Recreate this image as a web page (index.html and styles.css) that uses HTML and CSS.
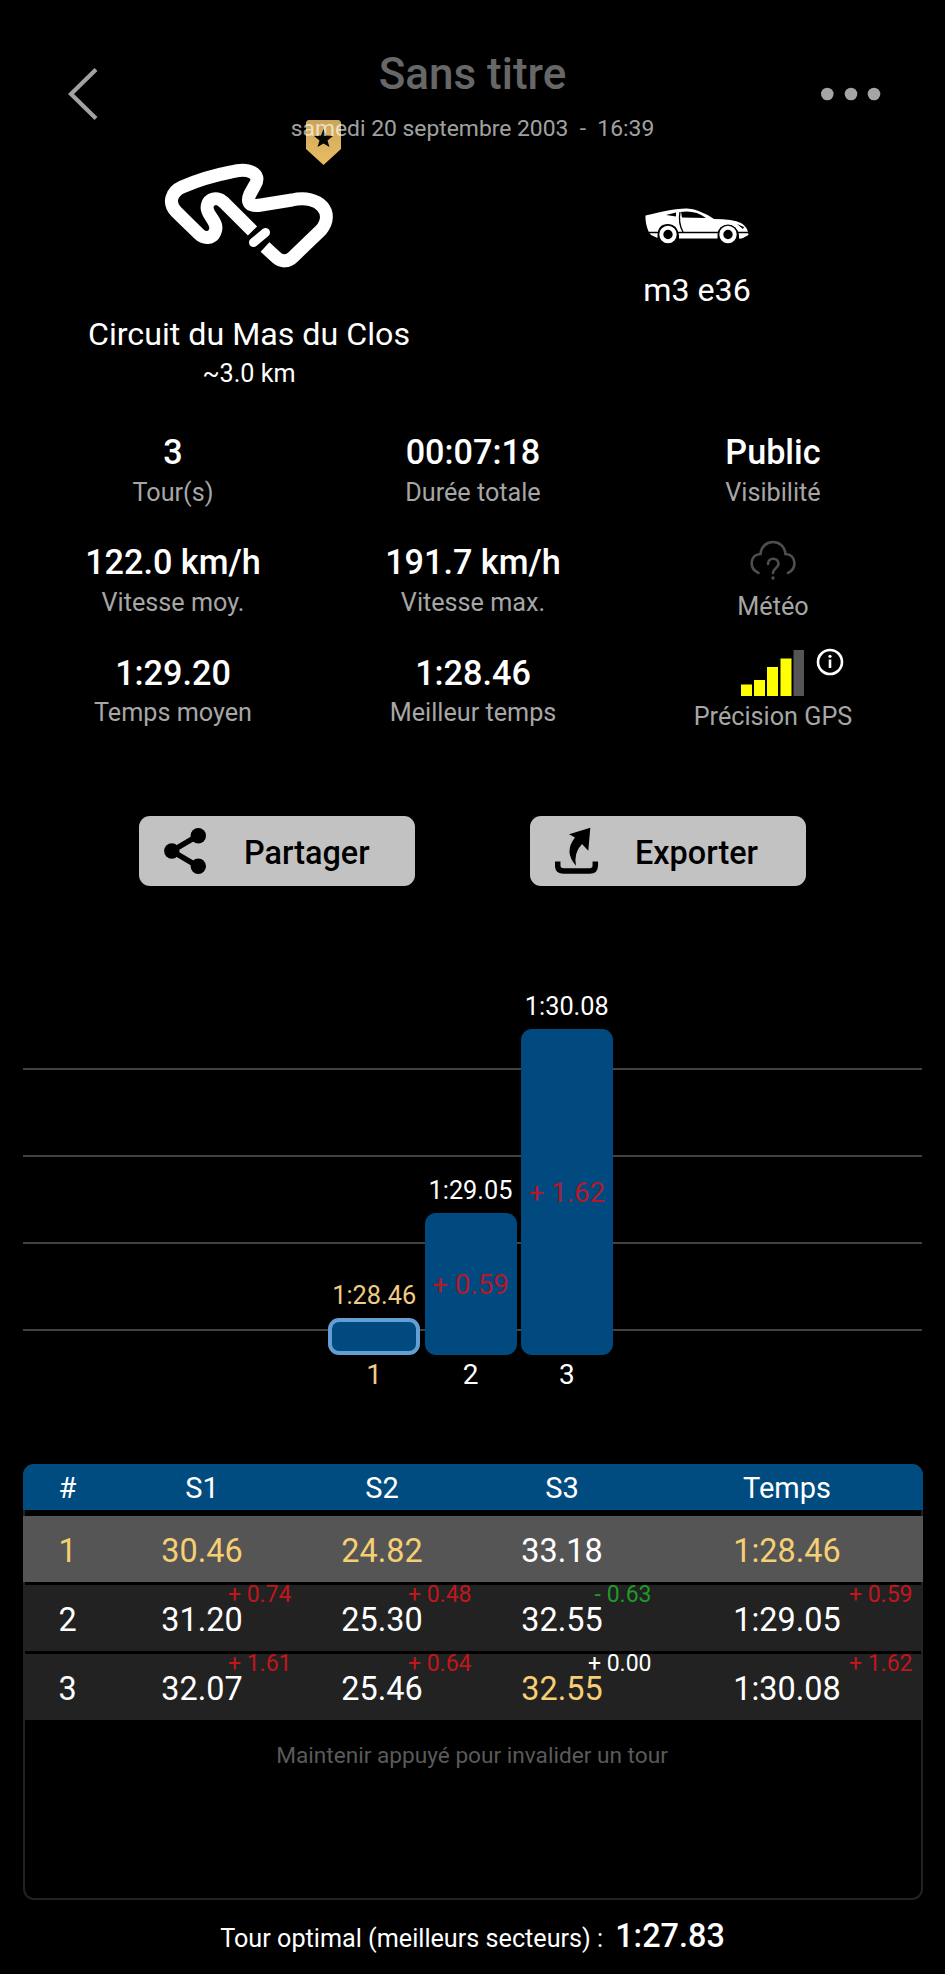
FILE: index.html
```html
<!DOCTYPE html>
<html lang="fr">
<head>
<meta charset="utf-8">
<title>Sans titre</title>
<link rel="stylesheet" href="styles.css">
</head>
<body>
<header class="header">
  <svg class="back" viewBox="0 0 30 52"><path d="M28 1.500L3 26L28 50.500" fill="none" stroke="#a2a2a2" stroke-width="4.200"/></svg>
  <div class="heading">
    <h1 class="title">Sans titre</h1>
    <p class="date">samedi 20 septembre 2003&nbsp; -&nbsp; 16:39</p>
  </div>
  <svg class="more" viewBox="0 0 62 14"><g fill="#a5a5a5"><circle cx="7.300" cy="7" r="6.300"/><circle cx="31" cy="7" r="6.300"/><circle cx="54" cy="7" r="6.300"/></g></svg>
</header>

<section class="hero">
  <div class="hero-col">
    <div class="track-box">
      <svg class="track" viewBox="-1 0 170 106">
        <path d="M87.500 68L59 39.500C50 31 40 38 42.500 47C44 54 54 60 50 69C47 76 39 76 34 71L11 48.500C3 40 6 29 17 24Q40 14 66 9C84 4 97 11 90 22L85 31C81 40 85 44 96 42L127 37C155 31 170 50 156 67L128 94C123 99 117 99 112 95L100 84" fill="none" stroke="#fff" stroke-width="13" stroke-linejoin="round"/>
        <path d="M89 79L100 69" stroke="#000" stroke-width="15" stroke-linecap="round"/>
        <path d="M88.500 79.500L100.500 69.500" stroke="#fff" stroke-width="9" stroke-linecap="round"/>
      </svg>
      <svg class="badge" viewBox="0 0 35 45">
        <defs><linearGradient id="gold" x1="0" y1="0" x2="0" y2="1"><stop offset="0" stop-color="#c9a458"/><stop offset=".6" stop-color="#deb560"/><stop offset="1" stop-color="#e6bc62"/></linearGradient></defs>
        <path d="M2 0H33L35 2V29L17.500 45L0 29V2Z" fill="url(#gold)"/>
        <path d="M17.500 9L20 15.500L27 16L21.500 20.500L23.500 27L17.500 23.500L11.500 27L13.500 20.500L8 16L15 15.500Z" fill="#070500"/>
      </svg>
    </div>
    <p class="hero-name">Circuit du Mas du Clos</p>
    <p class="hero-sub">~3.0 km</p>
  </div>
  <div class="hero-col hero-car">
    <svg class="car" viewBox="0 0 104 36">
      <path d="M.5 7.500Q30 0 42 .5Q54 1 69 11Q88 11 96 15Q103 19 103.500 27L98 30Q94 31.500 94 30V27Q92 17 83 17Q73 17 72.500 27V30.500H34V27Q32 16 23 16Q13 16 12.500 27V30L6 27L3.500 23.500Q0 15 .5 7.500Z" fill="#fff"/>
      <path d="M21 7L31 4.500V8.500ZM36 4Q50 2 61 10L37 9.500ZM92 16L99 19L98 21Z" fill="#000"/>
      <path d="M35 4Q33 15 38 24M3 24.500H14M32 24.500H74M92 24.500H104" fill="none" stroke="#000" stroke-width="1.300"/>
      <circle cx="23" cy="26.500" r="10" fill="#000"/><circle cx="83" cy="26.500" r="10" fill="#000"/>
      <g fill="#000" stroke="#fff" stroke-width="4"><circle cx="23" cy="26.500" r="6.700"/><circle cx="83" cy="26.500" r="6.700"/></g>
    </svg>
    <p class="hero-name">m3 e36</p>
  </div>
</section>

<section class="stats">
  <div class="stat"><p class="value">3</p><p class="label">Tour(s)</p></div>
  <div class="stat"><p class="value">00:07:18</p><p class="label">Durée totale</p></div>
  <div class="stat"><p class="value">Public</p><p class="label">Visibilité</p></div>
  <div class="stat"><p class="value">122.0 km/h</p><p class="label">Vitesse moy.</p></div>
  <div class="stat"><p class="value">191.7 km/h</p><p class="label">Vitesse max.</p></div>
  <div class="stat">
    <div class="stat-icon">
      <svg class="cloud" viewBox="0 0 46 40"><g fill="none" stroke="#4e4e4e" stroke-width="2.600" stroke-linecap="round"><path d="M8.500 33C-2 28 .5 14 10.500 14C12 -2 34 -2 35.500 14C45.500 14 48 28 38 33"/><path d="M18 24C18 17 28.500 17 28.500 24C28.500 28 23 28 23 33"/></g><circle cx="23" cy="38" r="1.700" fill="#4e4e4e"/></svg>
    </div>
    <p class="label">Météo</p>
  </div>
  <div class="stat"><p class="value">1:29.20</p><p class="label">Temps moyen</p></div>
  <div class="stat"><p class="value">1:28.46</p><p class="label">Meilleur temps</p></div>
  <div class="stat">
    <div class="stat-icon">
      <svg class="signal" viewBox="0 0 63 46"><path d="M0 34.500H11V46H0ZM13 30H24V46H13ZM26 17H37V46H26ZM39.500 8.500H50.500V46H39.500Z" fill="#ff0"/><path d="M52.500 0H63V46H52.500Z" fill="#555"/></svg>
      <svg class="info" viewBox="0 0 28 28"><circle cx="14" cy="14" r="12" fill="none" stroke="#fff" stroke-width="2.600"/><path d="M14 11.500V20" stroke="#fff" stroke-width="2.600"/><circle cx="14" cy="8.300" r="1.600" fill="#fff"/></svg>
    </div>
    <p class="label">Précision GPS</p>
  </div>
</section>

<section class="actions">
  <button class="btn">
    <svg class="btn-icon" viewBox="0 0 44 48"><path d="M34 8.700L8 24L34 39.300" fill="none" stroke="#000" stroke-width="5.500"/><circle cx="34.300" cy="8.700" r="7.700"/><circle cx="7.800" cy="24" r="7.700"/><circle cx="34.300" cy="39.300" r="7.700"/></svg>
    <span class="btn-text">Partager</span>
  </button>
  <button class="btn">
    <svg class="btn-icon" viewBox="0 0 44 48"><path d="M2.700 34.500V38.500Q2.700 44 8.500 44H34.500Q40.300 44 40.300 38.500V34.500" fill="none" stroke="#000" stroke-width="5.500"/><path d="M35.300 .7L33.300 23.700L27 17Q18.500 26 21 38.700Q8.500 25 20 10.500L14 7.300Z"/></svg>
    <span class="btn-text">Exporter</span>
  </button>
</section>

<section class="chart">
  <div class="grid-lines"><i></i><i></i><i></i><i></i></div>
  <div class="bars">
    <div class="bar-col best"><span class="bar-time">1:28.46</span><div class="bar" style="height:37px"></div><span class="bar-num">1</span></div>
    <div class="bar-col"><span class="bar-time">1:29.05</span><div class="bar" style="height:142px">+ 0.59</div><span class="bar-num">2</span></div>
    <div class="bar-col"><span class="bar-time">1:30.08</span><div class="bar" style="height:326px">+ 1.62</div><span class="bar-num">3</span></div>
  </div>
</section>

<section class="laps">
  <div class="row head"><span>#</span><span>S1</span><span>S2</span><span>S3</span><span>Temps</span></div>
  <div class="row selected"><span class="gold">1</span><span class="gold">30.46</span><span class="gold">24.82</span><span>33.18</span><span class="gold">1:28.46</span></div>
  <div class="row"><span>2</span><span>31.20<b class="delta">+ 0.74</b></span><span>25.30<b class="delta">+ 0.48</b></span><span>32.55<b class="delta green">- 0.63</b></span><span>1:29.05<b class="delta last">+ 0.59</b></span></div>
  <div class="row"><span>3</span><span>32.07<b class="delta">+ 1.61</b></span><span>25.46<b class="delta">+ 0.64</b></span><span class="gold">32.55<b class="delta white">+ 0.00</b></span><span>1:30.08<b class="delta last">+ 1.62</b></span></div>
  <p class="hint">Maintenir appuyé pour invalider un tour</p>
</section>

<footer class="optimal"><span>Tour optimal (meilleurs secteurs) :</span><strong>1:27.83</strong></footer>
</body>
</html>
```
FILE: styles.css
```css
* { box-sizing: border-box; margin: 0; padding: 0; }
body {
  width: 945px;
  height: 1974px;
  background: #000;
  color: #fff;
  font-family: Roboto, "Liberation Sans", sans-serif;
  display: flex;
  flex-direction: column;
  overflow: hidden;
}
svg { display: block; flex: none; }

.header {
  height: 150px;
  padding: 49px 63px 0 68px;
  display: flex;
  justify-content: space-between;
  position: relative;
  z-index: 2;
}
.back { width: 30px; height: 52px; margin-top: 19px; }
.more { width: 62px; height: 14px; margin-top: 38px; }
.heading { text-align: center; margin-left: 27px; }
.title { font-size: 44px; line-height: 50px; font-weight: 500; color: rgba(255, 255, 255, .41); }
.date { margin-top: 15px; font-size: 22.850px; line-height: 30px; color: rgba(255, 255, 255, .65); white-space: pre; }

.hero { height: 282px; padding: 0 24px 0 25px; display: grid; grid-template-columns: 1fr 1fr; }
.hero-col { display: flex; flex-direction: column; align-items: center; padding-top: 13px; }
.track-box { position: relative; width: 170px; height: 152px; }
.track { width: 170px; height: 106px; }
.badge { position: absolute; width: 35px; height: 45px; left: 142px; top: -43px; }
.hero-name { font-size: 32.200px; line-height: 38px; }
.hero-sub { font-size: 25.200px; line-height: 30px; margin-top: 6px; }
.hero-car { padding-top: 58px; }
.car { width: 104px; height: 36px; margin-bottom: 27px; }

.stats { height: 384px; padding: 0 22px 0 23px; display: grid; grid-template-columns: repeat(3, 1fr); grid-auto-rows: 110.300px; text-align: center; }
.value { font-size: 34.200px; line-height: 40px; font-weight: 500; }
.label { font-size: 25.200px; line-height: 30px; margin-top: 5.500px; color: #a6a6a6; }
.stat-icon { height: 44px; position: relative; display: flex; justify-content: center; }
.cloud { width: 46px; height: 40px; margin-top: -2px; }
.signal { width: 63px; height: 46px; margin: -3px 2px 0 0; }
.info { position: absolute; width: 28px; height: 28px; left: 193px; top: -5px; }

.actions { height: 70px; padding: 0 139px; display: flex; justify-content: space-between; }
.btn { width: 276px; height: 70px; border: 0; border-radius: 11px; background: #c2c2c2; color: #000; font-family: inherit; padding-left: 25px; display: flex; align-items: center; }
.btn-icon { width: 44px; height: 48px; }
.btn-text { margin: 3px 0 0 36px; font-size: 32.400px; line-height: 38px; font-weight: 500; }

.chart { margin: 109px 23px 0; height: 402px; position: relative; }
.grid-lines { height: 338px; padding: 73px 0 2px; display: flex; flex-direction: column; justify-content: space-between; }
.grid-lines i { height: 2px; background: #414141; }
.bars { position: absolute; inset: 0; display: flex; justify-content: center; align-items: flex-end; gap: 4.300px; padding: 0 4px 5px 0; }
.bar-col { width: 92px; display: flex; flex-direction: column; align-items: center; }
.bar-time { font-size: 25.300px; line-height: 30px; margin-bottom: 7px; }
.bar { width: 92px; border-radius: 11px; background: #004a7f; color: #b5182c; font-size: 27.600px; display: flex; align-items: center; justify-content: center; white-space: pre; }
.bar-num { font-size: 28px; line-height: 34px; margin-top: 3px; }
.best { color: #f1cb86; }
.best .bar { border: 4px solid #639fd2; }

.laps { margin: 67px 22px 0 23px; height: 436px; border: 2px solid #222; border-top: 0; border-radius: 11px; }
.row { margin: 0 -2px 3px; height: 66px; display: grid; grid-template-columns: 89px 180px 180px 180px 270px; background: #222; font-size: 32.400px; line-height: 70px; text-align: center; }
.row span { position: relative; }
.head { height: 46px; margin-bottom: 6px; background: #004c80; border-radius: 11px 11px 0 0; font-size: 29px; line-height: 48px; }
.selected { background: #555; }
.gold { color: #f6cf74; }
.delta { position: absolute; right: .5px; top: -3px; font-size: 23px; line-height: 26px; font-weight: 400; color: #c0161c; }
.delta.last { right: 9.500px; }
.delta.green { color: #1e9a28; }
.delta.white { color: #fff; }
.hint { margin-top: 21px; padding-right: 2px; text-align: center; font-size: 22.650px; line-height: 30px; color: #5a5a5a; }

.optimal { margin-top: 16px; height: 40px; display: flex; justify-content: center; align-items: baseline; gap: 12px; font-size: 25.200px; line-height: 40px; }
.optimal strong { font-size: 32.400px; font-weight: 500; }
```
